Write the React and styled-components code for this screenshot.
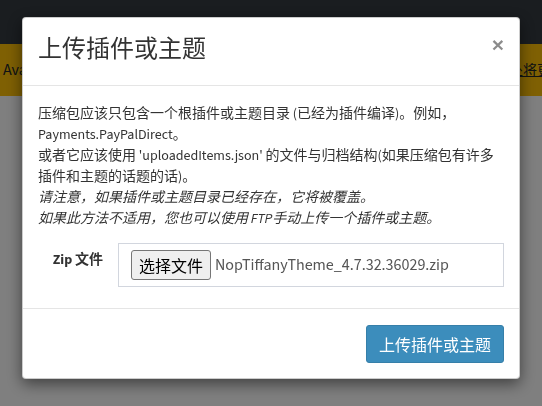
import React from "react";
import { styled, createGlobalStyle } from "styled-components";

const GlobalStyle = createGlobalStyle`
  html, body {
    margin: 0;
    padding: 0;
    height: 100%;
  }
  body {
    font-family: "Source Sans 3", "Noto Sans CJK SC", "Noto Sans", sans-serif;
    color: #333;
    background: #fff;
  }
`;

const Page = styled.div`
  min-height: 100vh;
  background: #fff;
`;

const NavBar = styled.div`
  height: 44px;
  background: #343a40;
`;

const AlertBar = styled.div`
  height: 52px;
  background: #ffc107;
  display: flex;
  align-items: center;
  white-space: nowrap;
  overflow: hidden;
  color: #212529;
  font-size: 16px;
`;

const AlertText = styled.span`
  flex: 0 0 492px;
  padding-left: 3px;
  overflow: hidden;
`;

const AlertLink = styled.a`
  color: #212529;
  text-decoration: underline;
  font-size: 14px;
`;

const Overlay = styled.div`
  position: fixed;
  inset: 0;
  background: rgba(0, 0, 0, 0.5);
  padding: 17px 22px;
  box-sizing: border-box;
`;

const Modal = styled.div`
  width: 498px;
  box-sizing: border-box;
  background: #fff;
  border: 1px solid rgba(0, 0, 0, 0.2);
  border-radius: 4px;
  box-shadow: 0 5px 15px rgba(0, 0, 0, 0.5);
`;

const Header = styled.div`
  display: flex;
  justify-content: space-between;
  align-items: flex-start;
  padding: 15px 15px 18px;
  border-bottom: 1px solid #e5e5e5;
`;

const Title = styled.h4`
  margin: 0;
  font-size: 24px;
  line-height: 34px;
  font-weight: 400;
  color: #333;
`;

const Close = styled.button`
  border: none;
  background: transparent;
  padding: 0;
  font-family: "Liberation Sans", sans-serif;
  font-size: 21px;
  font-weight: 700;
  line-height: 24px;
  color: #000;
  opacity: 0.45;
  cursor: pointer;
`;

const Body = styled.div`
  padding: 18px 15px 15px;
`;

const Note = styled.p`
  margin: 0;
  font-size: 14px;
  line-height: 21px;
  color: #333;
`;

const Em = styled.em`
  font-style: italic;
`;

const FormRow = styled.div`
  display: grid;
  grid-template-columns: 80px 1fr;
  margin: 13px 0 6px;
`;

const Label = styled.label`
  text-align: right;
  padding: 7px 15px 0 0;
  font-size: 14px;
  line-height: 20px;
  font-weight: 700;
  color: #333;
`;

const FileBox = styled.div`
  height: 44px;
  box-sizing: border-box;
  border: 1px solid #d2d6de;
  padding: 0 12px;
  display: flex;
  align-items: center;
  gap: 4px;
`;

const FileButton = styled.span`
  height: 30px;
  box-sizing: border-box;
  padding: 0 7px;
  display: flex;
  align-items: center;
  background: #efefef;
  border: 1px solid #767676;
  border-radius: 3px;
  font-family: "Noto Sans CJK SC", sans-serif;
  font-size: 16px;
  color: #000;
`;

const FileName = styled.span`
  font-size: 16px;
  color: #555;
`;

const Footer = styled.div`
  display: flex;
  justify-content: flex-end;
  padding: 16px 15px 15px;
  border-top: 1px solid #e5e5e5;
`;

const PrimaryBtn = styled.button`
  height: 38px;
  padding: 0 12px;
  border: 1px solid #367fa9;
  border-radius: 3px;
  background: #3c8dbc;
  color: #fff;
  font-family: inherit;
  font-size: 16px;
  cursor: pointer;
`;

export default function App() {
  return (
    <>
      <GlobalStyle />
      <Page>
        <NavBar />
        <AlertBar>
          <AlertText>Available new version of nopCommerce</AlertText>
          <AlertLink href="#">此处将更新</AlertLink>
        </AlertBar>
      </Page>
      <Overlay>
        <Modal>
          <Header>
            <Title>上传插件或主题</Title>
            <Close>×</Close>
          </Header>
          <Body>
            <Note>
              压缩包应该只包含一个根插件或主题目录 (已经为插件编译)。例如，Payments.PayPalDirect。
              <br />
              或者它应该使用 'uploadedItems.json' 的文件与归档结构(如果压缩包有许多插件和主题的话题的话)。
              <br />
              <Em>请注意，如果插件或主题目录已经存在，它将被覆盖。</Em>
              <br />
              <Em>如果此方法不适用，您也可以使用 FTP手动上传一个插件或主题。</Em>
            </Note>
            <FormRow>
              <Label>Zip 文件</Label>
              <FileBox>
                <FileButton>选择文件</FileButton>
                <FileName>NopTiffanyTheme_4.7.32.36029.zip</FileName>
              </FileBox>
            </FormRow>
          </Body>
          <Footer>
            <PrimaryBtn>上传插件或主题</PrimaryBtn>
          </Footer>
        </Modal>
      </Overlay>
    </>
  );
}
